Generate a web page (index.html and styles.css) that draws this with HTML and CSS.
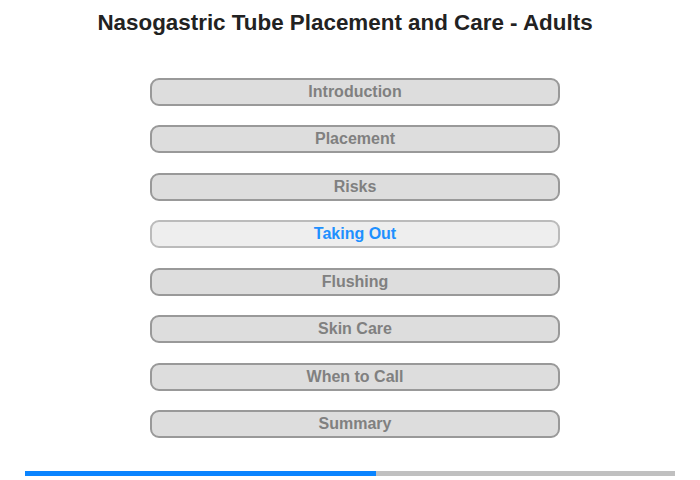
FILE: index.html
```html
<!DOCTYPE html>
<html>
<head>
  <meta charset="utf-8" />
  <title>Nasogastric Tube Placement and Care - Adults</title>
  <link rel="stylesheet" href="styles.css">
</head>
<body>
  <div class="page">
    <h1>Nasogastric Tube Placement and Care - Adults</h1>
    <div class="menu">
      <div class="btn">Introduction</div>
      <div class="btn">Placement</div>
      <div class="btn">Risks</div>
      <div class="btn on">Taking Out</div>
      <div class="btn">Flushing</div>
      <div class="btn">Skin Care</div>
      <div class="btn">When to Call</div>
      <div class="btn">Summary</div>
    </div>
    <div class="progress"><div class="fill"></div></div>
  </div>
</body>
</html>
```

FILE: styles.css
```css
body {
  margin: 0;
  padding: 0;
  background: #fff;
  font-family: "Liberation Sans", Arial, sans-serif;
}
.page {
  width: 700px;
  height: 480px;
}
h1 {
  margin: 0;
  padding: 10px 10px 0 0;
  font-size: 22.4px;
  line-height: 25px;
  font-weight: bold;
  color: #222;
  text-align: center;
}
.menu {
  margin: 43px 0 0 150px;
  width: 410px;
  display: flex;
  flex-direction: column;
  gap: 19.43px;
}
.btn {
  box-sizing: border-box;
  height: 28px;
  line-height: 24px;
  border: 2px solid #999;
  border-radius: 9px;
  background: #ddd;
  color: #808080;
  font-size: 16px;
  font-weight: bold;
  text-align: center;
}
.btn.on {
  background: #eee;
  border-color: #bbb;
  color: #1e90ff;
}
.progress {
  margin: 33px 25px 0 25px;
  height: 5px;
  background: #c0c0c0;
}
.progress .fill {
  width: 351px;
  height: 5px;
  background: #0a84ff;
}
```
